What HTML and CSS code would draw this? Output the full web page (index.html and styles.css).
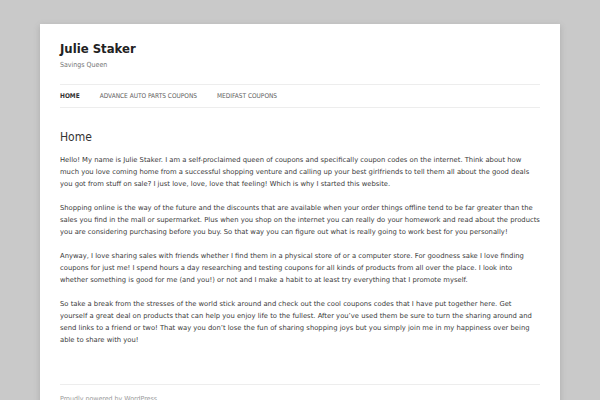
FILE: index.html
```html
<!DOCTYPE html>
<html lang="en">
<head>
    <meta charset="UTF-8">
    <meta name="viewport" content="width=device-width, initial-scale=1.0">
    <title>Julie Staker | Savings Queen</title>
    <link rel="stylesheet" href="styles.css">
</head>
<body>
    <div class="site">
        <header class="site-header">
            <h1 class="site-title">Julie Staker</h1>
            <h2 class="site-description">Savings Queen</h2>
            <nav class="main-nav">
                <a href="#" class="current">Home</a>
                <a href="#">Advance Auto Parts Coupons</a>
                <a href="#">Medifast Coupons</a>
            </nav>
        </header>

        <div class="entry">
            <h1 class="entry-title">Home</h1>
            <p>Hello! My name is Julie Staker. I am a self-proclaimed queen of coupons and specifically coupon codes on the internet. Think about how much you love coming home from a successful shopping venture and calling up your best girlfriends to tell them all about the good deals you got from stuff on sale? I just love, love, love that feeling! Which is why I started this website.</p>
            <p>Shopping online is the way of the future and the discounts that are available when your order things offline tend to be far greater than the sales you find in the mall or supermarket. Plus when you shop on the internet you can really do your homework and read about the products you are considering purchasing before you buy. So that way you can figure out what is really going to work best for you personally!</p>
            <p>Anyway, I love sharing sales with friends whether I find them in a physical store of or a computer store. For goodness sake I love finding coupons for just me! I spend hours a day researching and testing coupons for all kinds of products from all over the place. I look into whether something is good for me (and you!) or not and I make a habit to at least try everything that I promote myself.</p>
            <p>So take a break from the stresses of the world stick around and check out the cool coupons codes that I have put together here. Get yourself a great deal on products that can help you enjoy life to the fullest. After you&rsquo;ve used them be sure to turn the sharing around and send links to a friend or two! That way you don&rsquo;t lose the fun of sharing shopping joys but you simply join me in my happiness over being able to share with you!</p>
        </div>

        <footer class="site-footer">
            <span>Proudly powered by WordPress</span>
        </footer>
    </div>
</body>
</html>
```

FILE: styles.css
```css
body {
    margin: 0;
    padding-top: 24px;
    background-color: #c9c9c9;
    font-family: "DejaVu Sans Condensed", "DejaVu Sans", sans-serif;
    font-stretch: semi-condensed;
    color: #444;
}
.site {
    width: 480px;
    margin: 0 auto;
    padding: 0 20px;
    background-color: #fff;
    box-shadow: 0 2px 6px rgba(100, 100, 100, 0.3);
    min-height: 420px;
}
.site-header {
    padding-top: 14px;
}
.site-title {
    margin: 0;
    font-size: 13px;
    font-weight: bold;
    line-height: 22px;
    color: #222;
}
.site-description {
    margin: 0;
    font-size: 7px;
    font-weight: normal;
    line-height: 10px;
    color: #757575;
}
.main-nav {
    margin-top: 14px;
    border-top: 1px solid #ededed;
    border-bottom: 1px solid #ededed;
    display: flex;
    gap: 20px;
    line-height: 22px;
}
.main-nav a {
    font-size: 6.5px;
    text-transform: uppercase;
    text-decoration: none;
    color: #5e5e5e;
}
.main-nav a.current {
    font-weight: bold;
    color: #333;
}
.entry {
    padding-top: 19px;
    padding-bottom: 26px;
    border-bottom: 1px solid #ededed;
}
.entry-title {
    margin: 0 0 7px;
    font-size: 12px;
    font-weight: normal;
    line-height: 20px;
    color: #333;
}
.entry p {
    margin: 0 0 12px;
    font-family: "DejaVu Sans", sans-serif;
    font-stretch: normal;
    font-size: 6.8px;
    line-height: 12px;
    color: #3a3a3a;
}
.site-footer {
    padding-top: 10px;
    font-size: 7px;
    color: #999;
}
```
